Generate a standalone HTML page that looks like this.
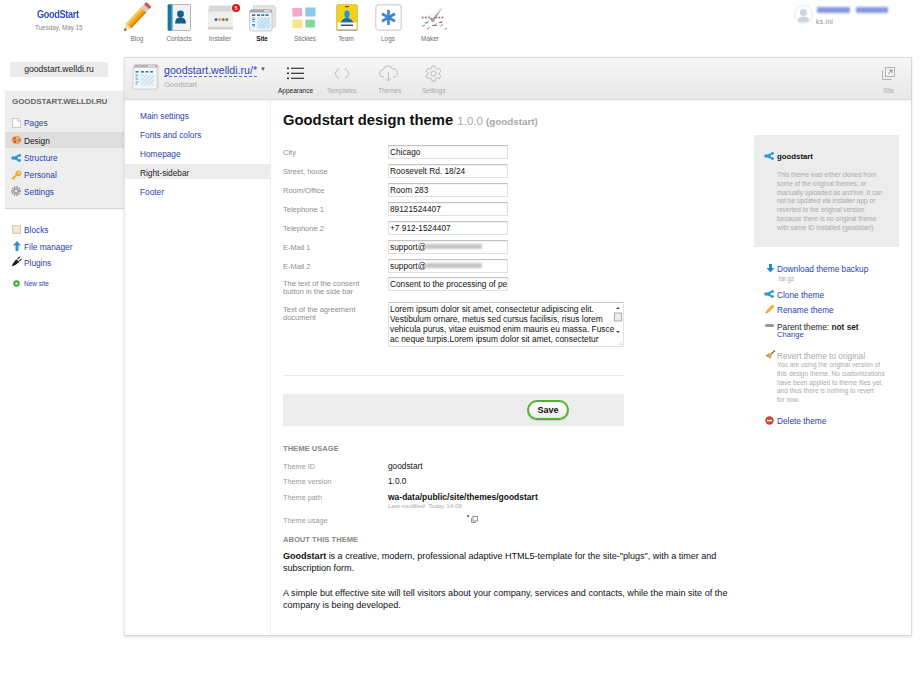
<!DOCTYPE html>
<html><head><meta charset="utf-8">
<style>
*{margin:0;padding:0;box-sizing:border-box}
html,body{width:920px;height:676px;overflow:hidden;background:#fff;font-family:"Liberation Sans",sans-serif;color:#000}
.a{position:absolute;white-space:nowrap}
.lnk{color:#2d4ab8}
body{-webkit-font-smoothing:antialiased}
.gr{color:#999}
/* top bar */
#brand{left:37px;top:9px;font-size:10px;color:#2f4fb8;letter-spacing:-0.4px;font-weight:bold;transform:scaleX(.92);transform-origin:left}
#date{left:35px;top:24px;font-size:6.3px;color:#888}
.applbl{font-size:6.4px;color:#707070;top:35px;text-align:center;width:40px}
/* panel */
#panel{left:124px;top:57px;width:788px;height:579px;background:#fff;border:1px solid #dcdcdc;border-left-color:#e6e6e6;border-bottom-color:#d6d6d6;box-shadow:0 0 2px rgba(0,0,0,.06),0 2px 3px rgba(0,0,0,.07)}
#phead{left:125px;top:58px;width:786px;height:42px;background:linear-gradient(#f6f6f6,#e8e8e8);border-bottom:1px solid #dcdcdc;box-shadow:0 1px 2px rgba(0,0,0,.07)}
#subnav{left:125px;top:100px;width:146px;height:535px;border-right:1px solid #eeeeee}
.sn{left:140px;font-size:8.3px;color:#2a42ac}
/* left sidebar */
#domain{left:10px;top:62px;width:98px;height:15px;background:#ebebeb;font-size:8.6px;color:#222;text-align:center;line-height:15px}
#lbox{left:5px;top:91px;width:120px;height:118px;background:#eeeeee;border-right:1px solid #d0d0d0;border-bottom:1px solid #d2d2d2;box-shadow:0 0 1px rgba(0,0,0,.08)}
.li{left:24px;font-size:8.3px;color:#2a3fae}
/* form */
.lbl{left:283px;font-size:7.5px;color:#8e8e8e}
.inp{left:388px;width:120px;height:14px;border:1px solid #e2e2e2;border-top-color:#c2c2c2;box-shadow:inset 0 1px 1px rgba(0,0,0,.05);font-size:8.3px;color:#111;padding:1px 1px;line-height:10.5px;overflow:hidden}
.tu{left:283px;font-size:7.3px;color:#999}
.tv{left:388px;font-size:8.3px;color:#111}
.rs{left:777px;font-size:8.3px;color:#2a3fae}
.rsg{left:777px;font-size:6.5px;color:#aaa;line-height:8.75px}
</style></head><body>

<!-- TOP HEADER -->
<div class="a" id="brand">GoodStart</div>
<div class="a" id="date">Tuesday, May 15</div>

<!-- app icons -->
<svg class="a" style="left:122px;top:2px" width="30" height="31" viewBox="0 0 30 31">
  <g transform="translate(2 29) rotate(-47)">
    <polygon points="0,0 7,-3.6 7,3.6" fill="#f3d9a8"/>
    <polygon points="0,0 2.6,-1.3 2.6,1.3" fill="#333"/>
    <rect x="7" y="-3.6" width="22" height="7.2" fill="#f2a91e"/>
    <rect x="7" y="-3.6" width="22" height="2.4" fill="#f9cc55"/>
    <rect x="7" y="1.4" width="22" height="2.2" fill="#d98b10"/>
    <rect x="29" y="-3.6" width="4" height="7.2" fill="#cfcfcf"/>
    <rect x="33" y="-3.6" width="3.5" height="7.2" rx="1.2" fill="#e0564a"/>
  </g>
</svg>
<div class="a applbl" style="left:117px">Blog</div>

<svg class="a" style="left:167px;top:4px" width="25" height="28" viewBox="0 0 25 28">
  <rect x="1" y="0.5" width="22.5" height="26" rx="1" fill="#f2f3f5" stroke="#a9adb2" stroke-width=".9"/>
  <rect x="0.8" y="0.5" width="4.6" height="26" rx=".8" fill="#1b74a0"/>
  <rect x="4" y="1" width="1.2" height="25" fill="#2ea0c8"/>
  <circle cx="13.5" cy="10" r="3.4" fill="#125f88"/>
  <path d="M8 19.5 Q8.2 13.3 13.5 13.3 Q18.8 13.3 19 19.5 Z" fill="#125f88"/>
</svg>
<div class="a applbl" style="left:159px">Contacts</div>

<svg class="a" style="left:207px;top:2px" width="35" height="29" viewBox="0 0 35 29">
  <path d="M2.5 3.5 H24 L26 9.5 H1 Z" fill="#d9d9d9"/>
  <rect x="1" y="9" width="25" height="18.5" fill="#efefef"/>
  <rect x="1" y="9" width="25" height="1" fill="#e2e2e2"/>
  <rect x="1" y="25" width="25" height="2.5" fill="#d2d2d2"/>
  <circle cx="9" cy="17.4" r="1.5" fill="#4060b0"/><circle cx="12.6" cy="17.4" r="1.5" fill="#d8b040"/>
  <circle cx="16.2" cy="17.4" r="1.5" fill="#c06050"/><circle cx="19.8" cy="17.4" r="1.5" fill="#50a050"/>
  <circle cx="29" cy="6" r="4.6" fill="#fff"/>
  <circle cx="29" cy="6" r="4" fill="#d81818"/>
  <text x="29" y="7.9" font-size="5.2" fill="#fff" text-anchor="middle" font-family="Liberation Sans" font-weight="bold">5</text>
</svg>
<div class="a applbl" style="left:200px">Installer</div>

<svg class="a" style="left:249px;top:5px" width="28" height="27" viewBox="0 0 28 27">
  <path d="M4.5 0.7 H25 L26.6 2.5 V21 L25 22.5 H4.5Z" fill="#e6e6e6" stroke="#c8c8c8" stroke-width=".6"/>
  <path d="M2.5 4.5 H21.5 L23 6 V25 L21.5 26 H1.5 L0.6 25 V6 Z" fill="#eef5fa" stroke="#b4b8bc" stroke-width=".7"/>
  <path d="M0.6 5.5 L2.5 4.5 H21.5 L23 5.5 V7.5 H0.6Z" fill="#a8a8a8"/>
  <rect x="15" y="5.3" width="6" height="1.3" fill="#eee"/>
  <rect x="3" y="9.3" width="3.2" height="1.7" fill="#2a78b0"/><rect x="8" y="9.3" width="3" height="1.7" fill="#2a78b0"/>
  <rect x="12.3" y="9.3" width="3" height="1.7" fill="#2a78b0"/><rect x="16.5" y="9.3" width="3" height="1.7" fill="#2a78b0"/>
  <path d="M3.5 13 h2 M3 14.5 h3 M3.5 16.5 h2 M3 19.5 h3 M3.5 21 h2.5" stroke="#3a88c8" stroke-width="1"/>
  <rect x="8.5" y="12.5" width="12.5" height="11" fill="#bcdcf2"/>
  <path d="M8.5 16 L12 12.5 M8.5 19.5 L15.5 12.5 M8.5 23 L19 12.5 M12 23.5 L21 14.5 M15.5 23.5 L21 18 M19 23.5 L21 21.5" stroke="#f2f8fc" stroke-width=".9"/>
</svg>
<div class="a applbl" style="left:242px;font-weight:bold;color:#111">Site</div>

<svg class="a" style="left:291px;top:6px" width="26" height="24" viewBox="0 0 26 24">
  <rect x="1.3" y="2" width="9.8" height="8.6" fill="#f4a8cc" transform="rotate(-3 6 6)"/>
  <rect x="14.3" y="1.5" width="10.2" height="9" fill="#8ccaec"/>
  <rect x="1.5" y="13.7" width="9.8" height="8.3" fill="#f8e58a"/>
  <rect x="14.5" y="13.7" width="9.5" height="7.8" fill="#86d896"/>
</svg>
<div class="a applbl" style="left:285px">Stickies</div>

<svg class="a" style="left:336px;top:4px" width="22" height="27" viewBox="0 0 22 27">
  <path d="M2 0.5 H20 Q21.5 0.5 21.5 2.5 V25.5 Q21.5 26.5 20.5 26.5 H1.5 Q0.5 26.5 0.5 25.5 V2.5 Q0.5 0.5 2 0.5Z" fill="#f5d21a" stroke="#c8b050" stroke-width=".6"/>
  <rect x="9" y="2" width="4" height="1.2" fill="#6a5a20"/>
  <path d="M11 6.5 C8.8 6.5 8.2 8.5 8.4 10.5 C8.6 12.5 9.3 13.5 9.6 14.2 C7 15 5.2 16.5 4.6 18.5 H17.4 C16.8 16.5 15 15 12.4 14.2 C12.7 13.5 13.4 12.5 13.6 10.5 C13.8 8.5 13.2 6.5 11 6.5Z" fill="#1c9ad6"/>
  <path d="M4.6 18.5 C5.2 16.5 7 15 9.6 14.2 L12.4 14.2 C15 15 16.8 16.5 17.4 18.5Z" fill="#1470b0"/>
  <rect x="1.5" y="18.5" width="19" height="7.5" fill="#fbfbfb"/>
  <rect x="5" y="20.6" width="12" height="1.3" fill="#333"/>
  <rect x="1" y="25.5" width="20" height="1" fill="#999"/>
</svg>
<div class="a applbl" style="left:326px">Team</div>

<svg class="a" style="left:375px;top:4px" width="27" height="27" viewBox="0 0 27 27">
  <rect x="0.75" y="0.75" width="25.5" height="25.5" rx="3" fill="#fff" stroke="#d8d8d8" stroke-width="1.4"/>
  <g stroke="#3a88d4" stroke-width="2.7" stroke-linecap="butt">
    <line x1="13.5" y1="6" x2="13.5" y2="21"/>
    <line x1="7" y1="9.75" x2="20" y2="17.25"/>
    <line x1="7" y1="17.25" x2="20" y2="9.75"/>
  </g>
</svg>
<div class="a applbl" style="left:368px">Logs</div>

<svg class="a" style="left:415px;top:0px" width="32" height="34" viewBox="0 0 32 34">
  <path d="M27.5 7.5 L16.8 22.3 L15.8 20 Z" fill="#aaa"/>
  <path d="M27.5 7.5 L16.8 22.3 L18.5 21.5 Z" fill="#666"/>
  <path d="M27.5 7.5 L11 18" stroke="#ddd" stroke-width=".6"/>
  <g fill="#d66a50"><circle cx="7.7" cy="17.6" r="1"/><circle cx="14" cy="17.6" r="1"/><circle cx="21.4" cy="17.6" r="1"/><circle cx="27.4" cy="17.6" r="1"/></g>
  <g fill="#4a88b8"><circle cx="10.8" cy="17.6" r="1"/><circle cx="16.2" cy="18.8" r="1.1"/><circle cx="24.3" cy="17.6" r="1"/></g>
  <g stroke="#777" stroke-width=".9" fill="none">
    <path d="M11.5 23.5 l2.5 -2.2"/><path d="M9.5 22.7 h3"/><path d="M25 23 l2.5 -2"/><path d="M23.5 22.5 h4"/>
    <path d="M7 26.5 l3 -1.5"/><path d="M18.5 26 l3 -2.5"/><path d="M17 25.5 h5"/><path d="M25.5 26 l2.5 -1.5"/>
    <path d="M12 29 l2.5 -1.5"/><path d="M29.5 29.5 l2.5 -1.5"/>
  </g>
</svg>
<div class="a applbl" style="left:410px">Maker</div>

<!-- user -->
<svg class="a" style="left:794px;top:5px" width="19" height="19" viewBox="0 0 19 19">
  <circle cx="9.5" cy="9.5" r="9" fill="#fff" stroke="#e0e4ea" stroke-width=".8"/>
  <circle cx="9.5" cy="7.5" r="3.6" fill="#cdd6e0"/>
  <path d="M3.5 16 Q4 11.5 9.5 11.5 Q15 11.5 15.5 16 Q9.5 19 3.5 16Z" fill="#cdd6e0"/>
</svg>
<div class="a" style="left:817px;top:7px;width:33px;height:6px;background:#7288de;filter:blur(1.2px);opacity:.85"></div><div class="a" style="left:856px;top:7px;width:32px;height:6px;background:#7288de;filter:blur(1.2px);opacity:.85"></div>
<div class="a" style="left:816px;top:18px;font-size:6.5px;color:#888;letter-spacing:.4px">ks.inl</div>

<!-- LEFT SIDEBAR -->
<div class="a" id="domain">goodstart.welldi.ru</div>
<div class="a" id="lbox"></div>
<div class="a" style="left:12px;top:97px;font-size:8px;color:#666;font-weight:bold;letter-spacing:-.05px">GOODSTART.WELLDI.RU</div>
<div class="a" style="left:5px;top:132px;width:120px;height:16px;background:#dedede"></div>
<div class="a li" style="top:118px">Pages</div>
<div class="a li" style="top:136px;color:#222">Design</div>
<div class="a li" style="top:153px">Structure</div>
<div class="a li" style="top:170px">Personal</div>
<div class="a li" style="top:187px">Settings</div>
<div class="a li" style="top:225px">Blocks</div>
<div class="a li" style="top:242px">File manager</div>
<div class="a li" style="top:258px">Plugins</div>
<div class="a li" style="top:280px;font-size:6.5px">New site</div>


<svg class="a" style="left:12px;top:118px" width="9" height="10" viewBox="0 0 9 10"><path d="M0.5 0.5 H6 L8.5 3 V9.5 H0.5Z" fill="#fbfbfb" stroke="#b8c0c8" stroke-width=".8"/><path d="M6 0.5 V3 H8.5" fill="#dde" stroke="#b8c0c8" stroke-width=".6"/></svg>
<svg class="a" style="left:11px;top:135px" width="11" height="10" viewBox="0 0 11 10"><ellipse cx="5.5" cy="5" rx="5" ry="4.2" fill="#e9a060"/><circle cx="3.5" cy="3.5" r="1.2" fill="#e04a3a"/><circle cx="6.5" cy="2.8" r="1.1" fill="#f0d040"/><circle cx="8.2" cy="5.2" r="1.1" fill="#4a90d0"/><circle cx="4" cy="6.8" r="1.2" fill="#d05030"/></svg>
<svg class="a" style="left:11px;top:154px" width="10" height="8" viewBox="0 0 10 8"><path d="M8.5 1.3 L2 4 L8.5 6.7 M2 4 H7" stroke="#2a9ad6" stroke-width="1.7" fill="none"/><circle cx="2" cy="4" r="1.7" fill="#2a9ad6"/><circle cx="8.5" cy="1.5" r="1.4" fill="#2a9ad6"/><circle cx="8.5" cy="6.5" r="1.4" fill="#2a9ad6"/></svg>
<svg class="a" style="left:11px;top:170px" width="11" height="10" viewBox="0 0 11 10"><circle cx="7.5" cy="3.3" r="2.9" fill="#eab030"/><path d="M5.8 4.8 L1 9" stroke="#eab030" stroke-width="2"/><path d="M2.5 7.5 L3.8 8.8" stroke="#eab030" stroke-width="1.4"/><circle cx="8" cy="2.8" r=".9" fill="#fff3c0"/></svg>
<svg class="a" style="left:11px;top:186px" width="10" height="10" viewBox="0 0 10 10"><circle cx="5" cy="5" r="4.1" fill="none" stroke="#8a8a8a" stroke-width="1.6" stroke-dasharray="1.4 1.0"/><circle cx="5" cy="5" r="3" fill="#9a9a9a"/><circle cx="5" cy="5" r="1.4" fill="#e4e4e4"/></svg>
<svg class="a" style="left:12px;top:225px" width="9" height="9" viewBox="0 0 9 9"><rect x="0" y="0" width="9" height="9" fill="#e4cdb0"/><rect x="1.3" y="1.3" width="6.4" height="6.4" fill="#f4e8da"/></svg>
<svg class="a" style="left:13px;top:241px" width="8" height="10" viewBox="0 0 8 10"><path d="M4 0 L8 4.5 H5.5 V10 H2.5 V4.5 H0Z" fill="#2a95d5"/></svg>
<svg class="a" style="left:11px;top:256px" width="11" height="11" viewBox="0 0 11 11"><path d="M0.5 10.5 L2 7.5 L5 3.5 L8 6 L4.5 9 Z" fill="#1a1a1a"/><path d="M5.5 3 L7 4.5 L8.5 6 L6 7.5Z" fill="#333"/><path d="M6.5 3 L9 0.8 M8.3 5 L10.5 3" stroke="#222" stroke-width="1.1"/></svg>
<svg class="a" style="left:13px;top:280px" width="7" height="7" viewBox="0 0 7 7"><circle cx="3.5" cy="3.5" r="3.2" fill="#3aa83a"/><circle cx="3.5" cy="3.5" r="1.2" fill="#fff"/></svg>

<!-- PANEL -->
<div class="a" id="panel"></div>
<div class="a" id="phead"></div>
<div class="a" id="subnav"></div>


<!-- panel header -->
<svg class="a" style="left:132px;top:63px" width="28" height="28" viewBox="0 0 28 28">
  <path d="M3 1.5 H25 L27 5 V24 L25 26.5 H2 L1 25 V5 Z" fill="#e4e4e4"/>
  <path d="M3 1.5 H25 L27 4.5 H1 Z" fill="#b4b4b4"/>
  <rect x="16" y="2.6" width="7" height="1.2" fill="#eee"/>
  <rect x="1" y="4.5" width="24" height="21.5" fill="#f4f8fb" stroke="#c0c4c8" stroke-width=".7"/>
  <path d="M25 4.5 L27 3.5 V24 L25 26" fill="#dcdcdc"/>
  <rect x="3.5" y="8" width="3" height="1.6" fill="#2b7dc0"/><rect x="9" y="8" width="3" height="1.6" fill="#2b7dc0"/>
  <rect x="13.5" y="8" width="3" height="1.6" fill="#2b7dc0"/><rect x="18" y="8" width="3" height="1.6" fill="#2b7dc0"/>
  <path d="M3.5 12 h3 M3.5 14 h2 M3.5 16 h3 M3.5 19 h3 M3.5 21 h2" stroke="#4a90d0" stroke-width=".9"/>
  <rect x="8.5" y="11.5" width="13.5" height="11" fill="#cfe3f3"/>
  <path d="M8.5 16 L13 11.5 M8.5 20 L17 11.5 M10 22.5 L21 11.5 M14 22.5 L22 14.5 M18 22.5 L22 18.5" stroke="#fff" stroke-width="1"/>
</svg>
<div class="a" style="left:164px;top:65px;font-size:10.6px;color:#2b44c0;border-bottom:1px dashed #5570cc;line-height:11px">goodstart.welldi.ru/*</div>
<div class="a" style="left:260px;top:66px;font-size:6px;color:#555">&#9660;</div>
<div class="a" style="left:164px;top:80px;font-size:7.5px;color:#aaa">Goodstart</div>

<svg class="a" style="left:287px;top:67px" width="18" height="13" viewBox="0 0 18 13">
  <g fill="#333"><rect x="0" y="0.5" width="2" height="1.6"/><rect x="0" y="5.5" width="2" height="1.6"/><rect x="0" y="10.5" width="2" height="1.6"/>
  <rect x="4" y="0.7" width="13" height="1.2"/><rect x="4" y="5.7" width="13" height="1.2"/><rect x="4" y="10.7" width="13" height="1.2"/></g>
</svg>
<div class="a" style="left:278px;top:87px;font-size:6.5px;color:#222">Appearance</div>
<svg class="a" style="left:334px;top:67px" width="16" height="13" viewBox="0 0 16 13">
  <path d="M5 1 L0.8 6.5 L5 12 M11 1 L15.2 6.5 L11 12" stroke="#bbb" stroke-width="1" fill="none"/>
</svg>
<div class="a" style="left:327px;top:87px;font-size:6.5px;color:#aaa">Templates</div>
<svg class="a" style="left:379px;top:65px" width="19" height="17" viewBox="0 0 19 17">
  <path d="M5 12 H4 A3.5 3.5 0 0 1 4 5 A5 5 0 0 1 13.5 4 A3.8 3.8 0 0 1 15 12 H14" stroke="#bbb" stroke-width="1" fill="none"/>
  <path d="M9.5 7 V16 M7 13.5 L9.5 16 L12 13.5" stroke="#bbb" stroke-width="1" fill="none"/>
</svg>
<div class="a" style="left:378px;top:87px;font-size:6.5px;color:#aaa">Themes</div>
<svg class="a" style="left:425px;top:65px" width="17" height="17" viewBox="0 0 17 17">
  <path d="M7 1 H10 L10.5 3.2 L12.3 4.2 L14.4 3.4 L15.9 6 L14.2 7.5 V9.5 L15.9 11 L14.4 13.6 L12.3 12.8 L10.5 13.8 L10 16 H7 L6.5 13.8 L4.7 12.8 L2.6 13.6 L1.1 11 L2.8 9.5 V7.5 L1.1 6 L2.6 3.4 L4.7 4.2 L6.5 3.2 Z" stroke="#bbb" stroke-width="1" fill="none"/>
  <circle cx="8.5" cy="8.5" r="2.6" stroke="#bbb" stroke-width="1" fill="none"/>
</svg>
<div class="a" style="left:422px;top:87px;font-size:6.5px;color:#aaa">Settings</div>

<svg class="a" style="left:881px;top:66px" width="15" height="15" viewBox="0 0 15 15">
  <rect x="4.5" y="1.5" width="9" height="9" fill="#f2f2f2" stroke="#aaa" stroke-width=".9"/>
  <path d="M1.5 4.5 V13.5 H10.5" stroke="#aaa" stroke-width=".9" fill="none"/>
  <path d="M7 8 L11 4 M8 4 H11 V7" stroke="#888" stroke-width=".9" fill="none"/>
</svg>
<div class="a" style="left:883px;top:87px;font-size:6.5px;color:#aaa">Site</div>

<!-- subnav -->
<div class="a" style="left:125px;top:164px;width:145px;height:15px;background:#ececec"></div>
<div class="a sn" style="top:111px">Main settings</div>
<div class="a sn" style="top:130px">Fonts and colors</div>
<div class="a sn" style="top:149px">Homepage</div>
<div class="a sn" style="top:168px;color:#222">Right-sidebar</div>
<div class="a sn" style="top:187px">Footer</div>

<!-- title -->
<div class="a" style="left:283px;top:112px;font-size:14.8px;font-weight:bold;color:#111">Goodstart design theme <span style="color:#a8a8a8;font-size:11.5px;font-weight:normal">1.0.0 <span style="font-size:9.8px;font-weight:bold">(goodstart)</span></span></div>

<!-- form -->
<div class="a lbl" style="top:148px">City</div>
<div class="a inp" style="top:145px">Chicago</div>
<div class="a lbl" style="top:167px">Street, house</div>
<div class="a inp" style="top:164px">Roosevelt Rd. 18/24</div>
<div class="a lbl" style="top:186px">Room/Office</div>
<div class="a inp" style="top:183px">Room 283</div>
<div class="a lbl" style="top:205px">Telephone 1</div>
<div class="a inp" style="top:202px">89121524407</div>
<div class="a lbl" style="top:224px">Telephone 2</div>
<div class="a inp" style="top:221px">+7 912-1524407</div>
<div class="a lbl" style="top:243px">E-Mail 1</div>
<div class="a inp" style="top:240px">support@<span style="display:inline-block;width:56px;height:5px;background:#c4c4c4;filter:blur(1.1px);vertical-align:1px"></span></div>
<div class="a lbl" style="top:262px">E-Mail 2</div>
<div class="a inp" style="top:259px">support@<span style="display:inline-block;width:56px;height:5px;background:#c4c4c4;filter:blur(1.1px);vertical-align:1px"></span></div>
<div class="a lbl" style="top:280px;line-height:8px">The text of the consent<br>button in the side bar</div>
<div class="a inp" style="top:277px">Consent to the processing of pe</div>
<div class="a lbl" style="top:306px;line-height:8px">Text of the agreement<br>document</div>
<div class="a" style="left:388px;top:302px;width:236px;height:45px;border:1px solid #e0e0e0;border-top-color:#c6c6c6;font-size:8.4px;line-height:9.9px;color:#111;padding:2px 12px 0 1px;overflow:hidden">Lorem ipsum dolor sit amet, consectetur adipiscing elit.<br>Vestibulum ornare, metus sed cursus facilisis, risus lorem<br>vehicula purus, vitae euismod enim mauris eu massa. Fusce<br>ac neque turpis.Lorem ipsum dolor sit amet, consectetur</div>
<svg class="a" style="left:613px;top:304px" width="10" height="42" viewBox="0 0 10 42">
  <path d="M3 5 L5 3 L7 5Z" fill="#555"/>
  <rect x="1.5" y="9" width="7" height="8" fill="#eee" stroke="#999" stroke-width=".8"/>
  <path d="M3 27 L5 29 L7 27Z" fill="#555"/>
  <path d="M6 41 L9 38 M8 41 L9 40" stroke="#bbb" stroke-width=".7"/>
</svg>

<div class="a" style="left:283px;top:375px;width:341px;height:1px;background:#ececec"></div>
<div class="a" style="left:283px;top:394px;width:341px;height:32px;background:#ededed"></div>
<div class="a" style="left:527px;top:400px;width:42px;height:20px;border:2px solid #52b035;border-radius:10px;background:linear-gradient(#fff,#ececec);box-shadow:0 1px 1px rgba(0,0,0,.15);font-size:9px;font-weight:bold;color:#111;text-align:center;line-height:16.5px">Save</div>

<!-- theme usage -->
<div class="a" style="left:283px;top:444px;font-size:7.6px;color:#888;font-weight:bold">THEME USAGE</div>
<div class="a tu" style="top:462px">Theme ID</div>
<div class="a tv" style="top:461px">goodstart</div>
<div class="a tu" style="top:477px">Theme version</div>
<div class="a tv" style="top:476px">1.0.0</div>
<div class="a tu" style="top:493px">Theme path</div>
<div class="a tv" style="top:492px;font-weight:bold;font-size:8.5px">wa-data/public/site/themes/goodstart</div>
<div class="a" style="left:388px;top:502px;font-size:6.2px;color:#aaa">Last modified: Today 14:06</div>
<div class="a tu" style="top:516px">Theme usage</div>
<div class="a" style="left:467px;top:515px;width:2px;height:2px;background:#3a4ab0;border-radius:1px"></div><svg class="a" style="left:471px;top:516px" width="7" height="7" viewBox="0 0 7 7"><rect x="2" y=".5" width="4.5" height="4.5" fill="none" stroke="#777" stroke-width=".8"/><path d="M.5 2 V6.5 H5" fill="none" stroke="#777" stroke-width=".8"/></svg>
<div class="a" style="left:283px;top:535px;font-size:7.6px;color:#888;font-weight:bold">ABOUT THIS THEME</div>
<div class="a" style="left:283px;top:550px;font-size:9.1px;line-height:12px;color:#111;letter-spacing:-0.035px"><b>Goodstart</b> is a creative, modern, professional adaptive HTML5-template for the site-"plugs", with a timer and<br>subscription form.</div>
<div class="a" style="left:283px;top:587px;font-size:9.1px;line-height:12px;color:#111">A simple but effective site will tell visitors about your company, services and contacts, while the main site of the<br>company is being developed.</div>

<!-- right sidebar -->
<div class="a" style="left:754px;top:135px;width:145px;height:112px;background:#ececec"></div>
<svg class="a" style="left:764px;top:152px" width="10" height="8" viewBox="0 0 10 8">
  <path d="M8.5 1.3 L2 4 L8.5 6.7 M2 4 H7" stroke="#2a9ad6" stroke-width="1.7" fill="none"/><circle cx="2" cy="4" r="1.7" fill="#2a9ad6"/><circle cx="8.5" cy="1.5" r="1.4" fill="#2a9ad6"/><circle cx="8.5" cy="6.5" r="1.4" fill="#2a9ad6"/>
</svg>
<div class="a" style="left:777px;top:152px;font-size:7.8px;font-weight:bold;color:#111">goodstart</div>
<div class="a rsg" style="top:171px">This theme was either cloned from<br>some of the original themes, or<br>manually uploaded as archive. It can<br>not be updated via Installer app or<br>reverted to the original version<br>because there is no original theme<br>with same ID installed (goodstart).</div>

<svg class="a" style="left:766px;top:264px" width="9" height="9" viewBox="0 0 9 9"><path d="M3 0 H6 V4 H8.5 L4.5 8.5 L0.5 4 H3Z" fill="#2a8ad0"/></svg>
<div class="a rs" style="top:264px">Download theme backup</div>
<div class="a" style="left:777px;top:275px;font-size:6.3px;color:#aaa">.tar.gz</div>
<svg class="a" style="left:764px;top:290px" width="10" height="8" viewBox="0 0 10 8">
  <path d="M8.5 1.3 L2 4 L8.5 6.7 M2 4 H7" stroke="#2a9ad6" stroke-width="1.7" fill="none"/><circle cx="2" cy="4" r="1.7" fill="#2a9ad6"/><circle cx="8.5" cy="1.5" r="1.4" fill="#2a9ad6"/><circle cx="8.5" cy="6.5" r="1.4" fill="#2a9ad6"/>
</svg>
<div class="a rs" style="top:290px">Clone theme</div>
<svg class="a" style="left:765px;top:304px" width="10" height="10" viewBox="0 0 10 10"><path d="M2 8 L8.5 1.5" stroke="#f0b030" stroke-width="2.8"/><path d="M2 8 L1 9" stroke="#c08040" stroke-width="1.6"/></svg>
<div class="a rs" style="top:305px">Rename theme</div>
<div class="a" style="left:765px;top:324px;width:9px;height:3px;background:#999;border-radius:1.5px"></div>
<div class="a" style="left:777px;top:322px;font-size:8.3px;color:#222">Parent theme: <b>not set</b></div>
<div class="a rs" style="top:330px;font-size:7.6px">Change</div>
<svg class="a" style="left:765px;top:350px" width="11" height="10" viewBox="0 0 11 10"><path d="M1 5 L5 9 L7 6 L4 3 Z" fill="#e0a050"/><path d="M5.5 4.5 L10 0.5" stroke="#a06030" stroke-width="1.4"/><path d="M1 5 L3 7" stroke="#b07030" stroke-width=".8"/></svg>
<div class="a" style="left:777px;top:351px;font-size:8.3px;color:#aaa">Revert theme to original</div>
<div class="a rsg" style="top:361px">You are using the original version of<br>this design theme. No customizations<br>have been applied to theme files yet,<br>and thus there is nothing to revert<br>for now.</div>
<svg class="a" style="left:765px;top:416px" width="9" height="9" viewBox="0 0 9 9"><circle cx="4.5" cy="4.5" r="4.2" fill="#d84030"/><rect x="2" y="3.8" width="5" height="1.5" fill="#fff"/></svg>
<div class="a rs" style="top:416px">Delete theme</div>
</body></html>
